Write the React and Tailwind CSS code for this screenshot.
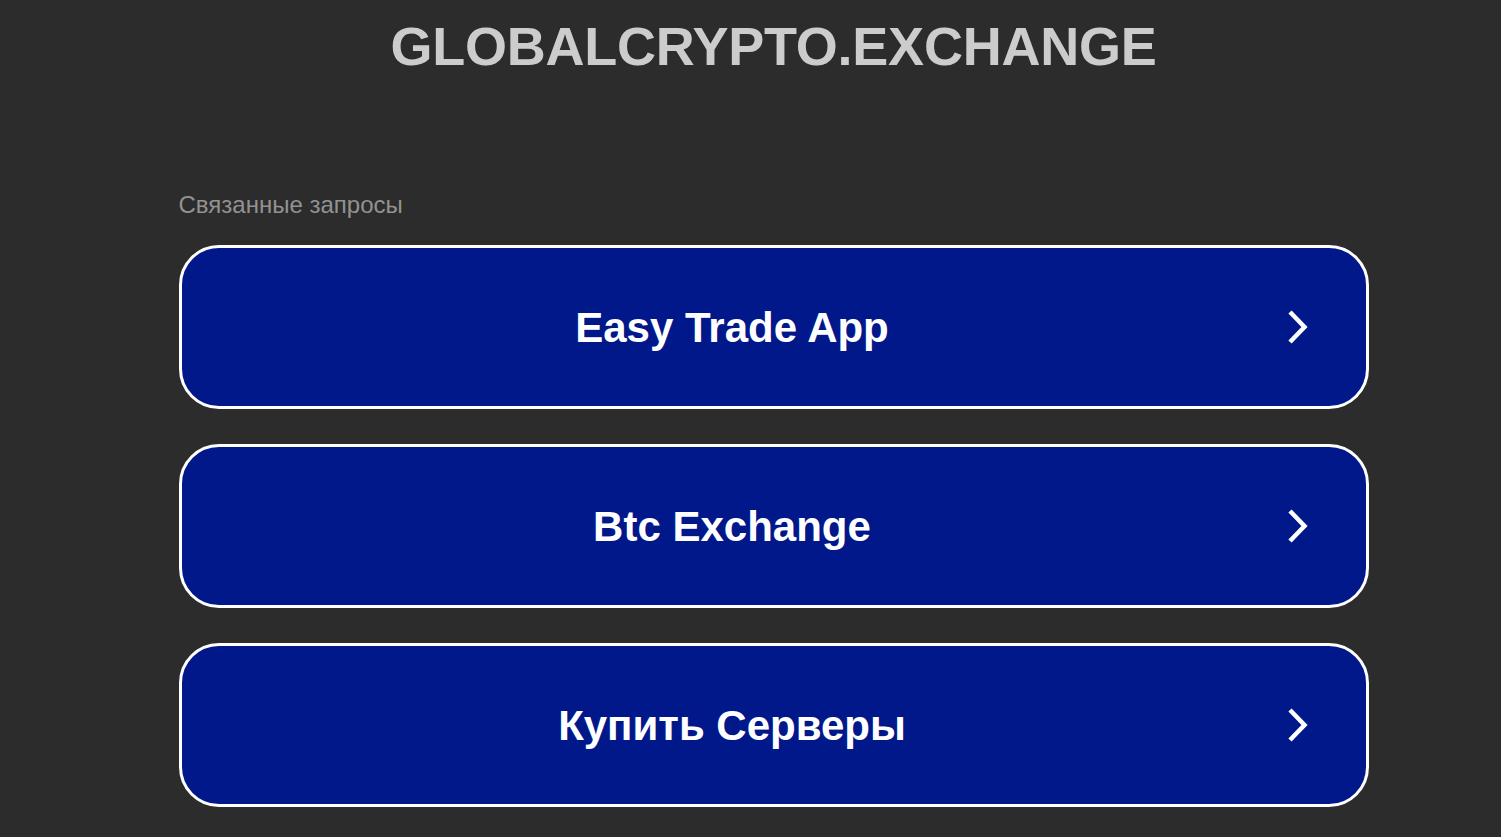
const ITEMS = ['Easy Trade App', 'Btc Exchange', 'Купить Серверы']

function Chevron() {
  return (
    <svg width="24" height="36" viewBox="0 0 24 36" fill="none" className="block shrink-0">
      <path d="M3 3 L17.5 18 L3 33" stroke="white" strokeWidth="4.5" strokeLinecap="butt" strokeLinejoin="miter" />
    </svg>
  )
}

export default function App() {
  return (
    <div className="min-h-[837px] bg-[#2c2c2c] pl-[46px] font-['Liberation_Sans',Arial,sans-serif]">
      <h1 className="pt-[13px] text-center text-[54px] font-bold leading-[66px] tracking-[-0.25px] text-[#cccccc]">
        GLOBALCRYPTO.EXCHANGE
      </h1>
      <div className="mx-auto mt-[112px] w-[1190px]">
        <p className="text-[24px] leading-[28px] text-[#929292]">Связанные запросы</p>
        <div className="mt-[26px] flex flex-col gap-[35px]">
          {ITEMS.map((t) => (
            <a
              key={t}
              href="#"
              className="flex h-[164px] items-center rounded-[40px] border-[3px] border-white bg-[#01188a] pl-[55px] pr-[55px]"
            >
              <span className="flex-1 text-center text-[42px] font-bold text-white">{t}</span>
              <span className="ml-[59px]">
                <Chevron />
              </span>
            </a>
          ))}
        </div>
      </div>
    </div>
  )
}
